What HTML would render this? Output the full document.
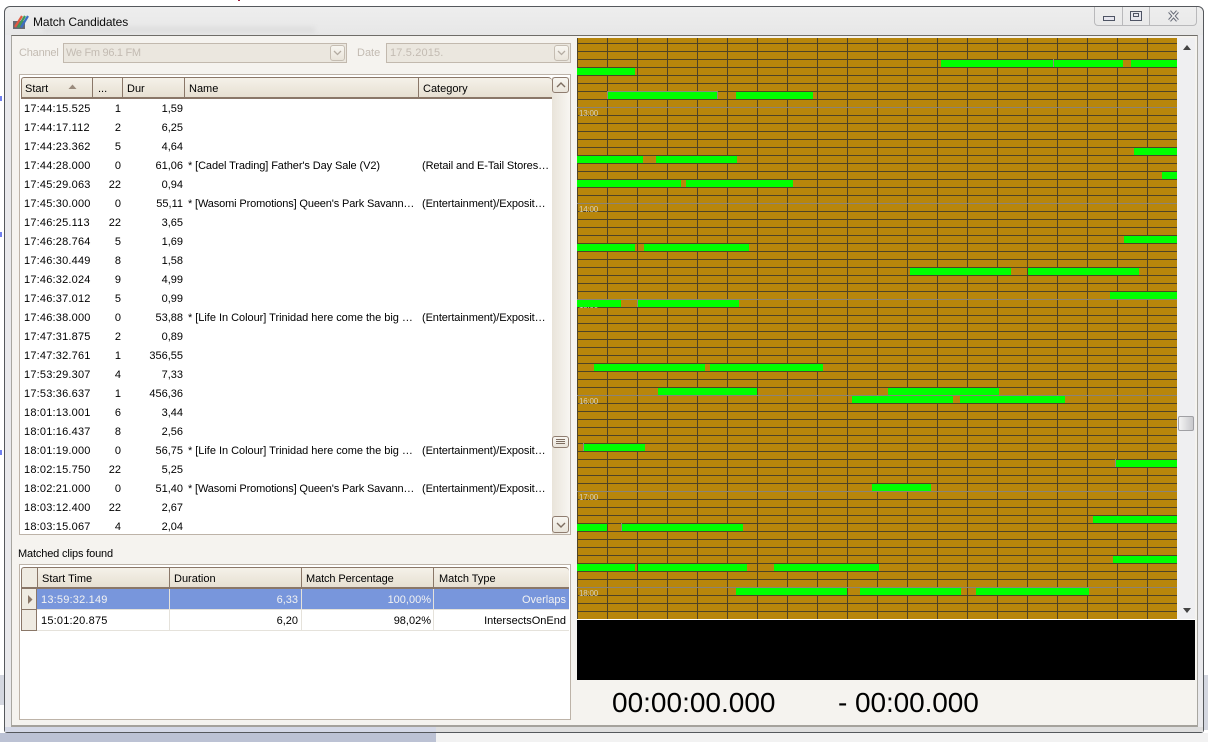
<!DOCTYPE html>
<html><head><meta charset="utf-8">
<style>
html,body{margin:0;padding:0;width:1208px;height:742px;overflow:hidden;background:#fff;font-family:"Liberation Sans",sans-serif;font-size:11px;color:#000}
div{box-sizing:border-box;position:absolute}
.t{white-space:nowrap;line-height:16px;height:14px}
.r{text-align:right}
.k{letter-spacing:.2px}
.n{letter-spacing:-.1px}
.w{letter-spacing:-.14px}
.hd{background:linear-gradient(#f5f1e9,#e7e0d2);border-top:1px solid #8a7768;border-bottom:2px solid #8a7768;border-left:1px solid #8a7768;height:22px}
.bt{background:linear-gradient(#f8f6f1,#e9e4da);border:1px solid #8f7d70;border-radius:3px}
</style></head><body>
<div style="left:0;top:0;width:1208px;height:8px;background:#fff"></div>
<div style="left:238px;top:0;width:2px;height:1px;background:#a02040"></div>
<div style="left:0;top:96px;width:2px;height:5px;background:#7080f0"></div>
<div style="left:0;top:232px;width:2px;height:5px;background:#7080f0"></div>
<div style="left:0;top:450px;width:2px;height:5px;background:#7080f0"></div>
<div style="left:0;top:675px;width:5px;height:30px;background:#d4d7e0"></div>
<div style="left:0;top:733px;width:436px;height:9px;background:#bcc2d4"></div>
<div style="left:436px;top:733px;width:772px;height:9px;background:#f2f2f2"></div>
<div style="left:1204px;top:675px;width:4px;height:55px;background:#d4d7e0"></div>
<div style="left:4px;top:6px;width:1200px;height:727px;background:#e9e9ec;border:1px solid #55585c;border-radius:6px 6px 3px 3px"></div>
<div style="left:5px;top:7px;width:1198px;height:28px;background:linear-gradient(#eeeeee,#e7e7e7);border-radius:6px 6px 0 0"></div>
<div style="left:5px;top:727px;width:431px;height:5px;background:#d4d8e6"></div>
<div style="left:436px;top:727px;width:767px;height:5px;background:#dedede"></div>
<div style="left:43px;top:27px;width:272px;height:6px;background:#dedede;filter:blur(2px)"></div>
<svg style="position:absolute;left:12px;top:13px" width="17" height="17" viewBox="0 0 17 17"><rect x="1" y="8" width="12" height="8" fill="#6a6a70"/><path d="M3 14L10 3" stroke="#e05a40" stroke-width="2.200"/><path d="M6 14.500L13 3" stroke="#3f9a5a" stroke-width="2.200"/><path d="M9 14.500L16 3" stroke="#3b6fc4" stroke-width="2.200"/></svg>
<div class="t" style="left:33px;top:14px;font-size:12px;letter-spacing:-.1px;color:#0a0a0a">Match Candidates</div>
<div style="left:1094px;top:7px;width:103px;height:19px;border:1px solid #b9b9bb;border-top:0;border-radius:0 0 4px 4px"></div>
<div style="left:1122px;top:7px;width:1px;height:19px;background:#b9b9bb"></div>
<div style="left:1149px;top:7px;width:1px;height:19px;background:#b9b9bb"></div>
<div style="left:1103px;top:16px;width:12px;height:5px;border:1px solid #4e5464;background:#e6e6ee"></div>
<div style="left:1130px;top:11px;width:12px;height:10px;border:1px solid #4e5464;background:#e6e6ee"></div>
<div style="left:1133px;top:13px;width:6px;height:4px;border:1px solid #4e5464"></div>
<svg style="position:absolute;left:1167px;top:10px" width="13" height="12"><path d="M2.500 1.500L10.500 10.500M10.500 1.500L2.500 10.500" stroke="#6a6e7a" stroke-width="3.600"/><path d="M2.500 1.500L10.500 10.500M10.500 1.500L2.500 10.500" stroke="#eeeeee" stroke-width="1.600"/></svg>

<div style="left:11px;top:35px;width:1187px;height:692px;background:#f5f3ef;border:1px solid #a8a6a0;border-top:1px solid #6f6d68;border-bottom:2px solid #a5a29c"></div>

<div class="t" style="left:19px;top:45px;color:#c3bbb2;letter-spacing:-.2px">Channel</div>
<div style="left:63px;top:43px;width:284px;height:20px;background:#ebe7df;border:1px solid #c2b9ae"></div>
<div class="t" style="left:66px;top:45px;color:#c3bbb2;letter-spacing:-.3px">We Fm 96.1 FM</div>
<div class="bt" style="left:330px;top:45px;width:15px;height:16px;border-color:#c5bdb2"></div>
<svg style="position:absolute;left:333px;top:50px" width="9" height="6"><path d="M1 1L4.500 4.500L8 1" fill="none" stroke="#b4aca2" stroke-width="1.300"/></svg>
<div class="t" style="left:357px;top:45px;color:#c3bbb2">Date</div>
<div style="left:386px;top:43px;width:185px;height:20px;background:#ebe7df;border:1px solid #c2b9ae"></div>
<div class="t" style="left:390px;top:45px;color:#c3bbb2;letter-spacing:.15px">17.5.2015.</div>
<div class="bt" style="left:554px;top:45px;width:15px;height:16px;border-color:#c5bdb2"></div>
<svg style="position:absolute;left:557px;top:50px" width="9" height="6"><path d="M1 1L4.500 4.500L8 1" fill="none" stroke="#b4aca2" stroke-width="1.300"/></svg>

<div style="left:19px;top:74px;width:552px;height:461px;background:#fff;border:1px solid #bdb3a8"></div>
<div class="hd" style="left:21px;top:77px;width:71px;border-radius:3px 0 0 0"></div>
<div class="hd" style="left:92px;top:77px;width:30px"></div>
<div class="hd" style="left:122px;top:77px;width:62px"></div>
<div class="hd" style="left:184px;top:77px;width:234px"></div>
<div class="hd" style="left:418px;top:77px;width:134px;border-radius:0 4px 0 0"></div>
<div class="t" style="left:25px;top:81px">Start</div>
<svg style="position:absolute;left:68px;top:84px" width="9" height="5"><path d="M0.500 5L4.500 0.500L8.500 5Z" fill="#9a8b7d"/></svg>
<div class="t" style="left:98px;top:81px">...</div>
<div class="t" style="left:127px;top:81px">Dur</div>
<div class="t" style="left:189px;top:81px">Name</div>
<div class="t" style="left:423px;top:81px">Category</div>

<div style="left:552px;top:77px;width:18px;height:457px;background:linear-gradient(90deg,#e9e4da,#f8f6f2)"></div>
<div class="bt" style="left:552px;top:77px;width:17px;height:16px"></div>
<svg style="position:absolute;left:556px;top:82px" width="10" height="6"><path d="M1 5L5 1L9 5" fill="none" stroke="#7d6d60" stroke-width="1.400"/></svg>
<div class="bt" style="left:552px;top:436px;width:17px;height:12px"></div>
<div style="left:556px;top:439px;width:9px;height:1px;background:#7d6d60;box-shadow:0 2px 0 #7d6d60,0 4px 0 #7d6d60"></div>
<div class="bt" style="left:552px;top:516px;width:17px;height:17px"></div>
<svg style="position:absolute;left:556px;top:522px" width="10" height="6"><path d="M1 1L5 5L9 1" fill="none" stroke="#7d6d60" stroke-width="1.400"/></svg>

<div class="t k" style="left:24px;top:101px">17:44:15.525</div><div class="t r" style="left:92px;top:101px;width:29px">1</div><div class="t r" style="left:122px;top:101px;width:61px">1,59</div>
<div class="t k" style="left:24px;top:120px">17:44:17.112</div><div class="t r" style="left:92px;top:120px;width:29px">2</div><div class="t r" style="left:122px;top:120px;width:61px">6,25</div>
<div class="t k" style="left:24px;top:139px">17:44:23.362</div><div class="t r" style="left:92px;top:139px;width:29px">5</div><div class="t r" style="left:122px;top:139px;width:61px">4,64</div>
<div class="t k" style="left:24px;top:158px">17:44:28.000</div><div class="t r" style="left:92px;top:158px;width:29px">0</div><div class="t r" style="left:122px;top:158px;width:61px">61,06</div>
<div class="t n" style="left:188px;top:158px">* [Cadel Trading] Father's Day Sale (V2)</div><div class="t n" style="left:422px;top:158px">(Retail and E-Tail Stores…</div>
<div class="t k" style="left:24px;top:177px">17:45:29.063</div><div class="t r" style="left:92px;top:177px;width:29px">22</div><div class="t r" style="left:122px;top:177px;width:61px">0,94</div>
<div class="t k" style="left:24px;top:196px">17:45:30.000</div><div class="t r" style="left:92px;top:196px;width:29px">0</div><div class="t r" style="left:122px;top:196px;width:61px">55,11</div>
<div class="t w" style="left:188px;top:196px">* [Wasomi Promotions] Queen's Park Savann…</div><div class="t n" style="left:422px;top:196px">(Entertainment)/Exposit…</div>
<div class="t k" style="left:24px;top:215px">17:46:25.113</div><div class="t r" style="left:92px;top:215px;width:29px">22</div><div class="t r" style="left:122px;top:215px;width:61px">3,65</div>
<div class="t k" style="left:24px;top:234px">17:46:28.764</div><div class="t r" style="left:92px;top:234px;width:29px">5</div><div class="t r" style="left:122px;top:234px;width:61px">1,69</div>
<div class="t k" style="left:24px;top:253px">17:46:30.449</div><div class="t r" style="left:92px;top:253px;width:29px">8</div><div class="t r" style="left:122px;top:253px;width:61px">1,58</div>
<div class="t k" style="left:24px;top:272px">17:46:32.024</div><div class="t r" style="left:92px;top:272px;width:29px">9</div><div class="t r" style="left:122px;top:272px;width:61px">4,99</div>
<div class="t k" style="left:24px;top:291px">17:46:37.012</div><div class="t r" style="left:92px;top:291px;width:29px">5</div><div class="t r" style="left:122px;top:291px;width:61px">0,99</div>
<div class="t k" style="left:24px;top:310px">17:46:38.000</div><div class="t r" style="left:92px;top:310px;width:29px">0</div><div class="t r" style="left:122px;top:310px;width:61px">53,88</div>
<div class="t" style="left:188px;top:310px;letter-spacing:-.03px">* [Life In Colour] Trinidad here come the big …</div><div class="t n" style="left:422px;top:310px">(Entertainment)/Exposit…</div>
<div class="t k" style="left:24px;top:329px">17:47:31.875</div><div class="t r" style="left:92px;top:329px;width:29px">2</div><div class="t r" style="left:122px;top:329px;width:61px">0,89</div>
<div class="t k" style="left:24px;top:348px">17:47:32.761</div><div class="t r" style="left:92px;top:348px;width:29px">1</div><div class="t r" style="left:122px;top:348px;width:61px">356,55</div>
<div class="t k" style="left:24px;top:367px">17:53:29.307</div><div class="t r" style="left:92px;top:367px;width:29px">4</div><div class="t r" style="left:122px;top:367px;width:61px">7,33</div>
<div class="t k" style="left:24px;top:386px">17:53:36.637</div><div class="t r" style="left:92px;top:386px;width:29px">1</div><div class="t r" style="left:122px;top:386px;width:61px">456,36</div>
<div class="t k" style="left:24px;top:405px">18:01:13.001</div><div class="t r" style="left:92px;top:405px;width:29px">6</div><div class="t r" style="left:122px;top:405px;width:61px">3,44</div>
<div class="t k" style="left:24px;top:424px">18:01:16.437</div><div class="t r" style="left:92px;top:424px;width:29px">8</div><div class="t r" style="left:122px;top:424px;width:61px">2,56</div>
<div class="t k" style="left:24px;top:443px">18:01:19.000</div><div class="t r" style="left:92px;top:443px;width:29px">0</div><div class="t r" style="left:122px;top:443px;width:61px">56,75</div>
<div class="t" style="left:188px;top:443px;letter-spacing:-.03px">* [Life In Colour] Trinidad here come the big …</div><div class="t n" style="left:422px;top:443px">(Entertainment)/Exposit…</div>
<div class="t k" style="left:24px;top:462px">18:02:15.750</div><div class="t r" style="left:92px;top:462px;width:29px">22</div><div class="t r" style="left:122px;top:462px;width:61px">5,25</div>
<div class="t k" style="left:24px;top:481px">18:02:21.000</div><div class="t r" style="left:92px;top:481px;width:29px">0</div><div class="t r" style="left:122px;top:481px;width:61px">51,40</div>
<div class="t w" style="left:188px;top:481px">* [Wasomi Promotions] Queen's Park Savann…</div><div class="t n" style="left:422px;top:481px">(Entertainment)/Exposit…</div>
<div class="t k" style="left:24px;top:500px">18:03:12.400</div><div class="t r" style="left:92px;top:500px;width:29px">22</div><div class="t r" style="left:122px;top:500px;width:61px">2,67</div>
<div class="t k" style="left:24px;top:519px">18:03:15.067</div><div class="t r" style="left:92px;top:519px;width:29px">4</div><div class="t r" style="left:122px;top:519px;width:61px">2,04</div>

<div class="t" style="left:18px;top:546px;letter-spacing:-.15px">Matched clips found</div>
<div style="left:19px;top:564px;width:552px;height:156px;background:#fff;border:1px solid #bdb3a8"></div>
<div class="hd" style="left:21px;top:567px;width:16px;border-radius:3px 0 0 0;background:#efebe2"></div>
<div class="hd" style="left:37px;top:567px;width:132px"></div>
<div class="hd" style="left:169px;top:567px;width:132px"></div>
<div class="hd" style="left:301px;top:567px;width:132px"></div>
<div class="hd" style="left:433px;top:567px;width:136px;border-radius:0 4px 0 0"></div>
<div class="t" style="left:42px;top:571px">Start Time</div>
<div class="t" style="left:174px;top:571px">Duration</div>
<div class="t n" style="left:306px;top:571px">Match Percentage</div>
<div class="t" style="left:439px;top:571px">Match Type</div>

<div style="left:21px;top:589px;width:16px;height:21px;background:#efebe2;border:1px solid #8a7768;border-width:0 1px 1px 1px"></div>
<div style="left:21px;top:610px;width:16px;height:21px;background:#efebe2;border:1px solid #8a7768;border-width:0 1px 1px 1px"></div>
<svg style="position:absolute;left:28px;top:595px" width="5" height="9"><path d="M0 0L4.500 4.500L0 9Z" fill="#8a7768"/></svg>
<div style="left:37px;top:589px;width:532px;height:20px;background:#7896dc"></div>
<div style="left:169px;top:589px;width:1px;height:41px;background:#e5e2db"></div>
<div style="left:301px;top:589px;width:1px;height:41px;background:#e5e2db"></div>
<div style="left:433px;top:589px;width:1px;height:41px;background:#e5e2db"></div>
<div style="left:37px;top:609px;width:532px;height:1px;background:#e5e2db"></div>
<div style="left:37px;top:630px;width:532px;height:1px;background:#e5e2db"></div>
<div class="t k" style="left:41px;top:592px;color:#f2f2f2">13:59:32.149</div>
<div class="t r" style="left:170px;top:592px;width:128px;color:#f2f2f2">6,33</div>
<div class="t r" style="left:303px;top:592px;width:128px;color:#f2f2f2">100,00%</div>
<div class="t r" style="left:434px;top:592px;width:132px;color:#f2f2f2">Overlaps</div>
<div class="t k" style="left:41px;top:613px">15:01:20.875</div>
<div class="t r" style="left:170px;top:613px;width:128px">6,20</div>
<div class="t r" style="left:303px;top:613px;width:128px">98,02%</div>
<div class="t r" style="left:434px;top:613px;width:132px">IntersectsOnEnd</div>

<svg style="position:absolute;left:577px;top:38px" width="600" height="581" viewBox="577 38 600 581" shape-rendering="crispEdges">
<rect x="577" y="38" width="600" height="582" fill="#b8860b"/>
<path stroke="#4f4326" stroke-width="1" fill="none" d="M577.500 38V620M607.500 38V620M637.500 38V620M667.500 38V620M697.500 38V620M727.500 38V620M757.500 38V620M787.500 38V620M817.500 38V620M847.500 38V620M877.500 38V620M907.500 38V620M937.500 38V620M967.500 38V620M997.500 38V620M1027.500 38V620M1057.500 38V620M1087.500 38V620M1117.500 38V620M1147.500 38V620"/>
<path stroke="#4f4326" stroke-width="1" fill="none" d="M577 43.500H1177M577 51.500H1177M577 59.500H1177M577 67.500H1177M577 75.500H1177M577 83.500H1177M577 91.500H1177M577 99.500H1177M577 115.500H1177M577 123.500H1177M577 131.500H1177M577 139.500H1177M577 147.500H1177M577 155.500H1177M577 163.500H1177M577 171.500H1177M577 179.500H1177M577 187.500H1177M577 195.500H1177M577 211.500H1177M577 219.500H1177M577 227.500H1177M577 235.500H1177M577 243.500H1177M577 251.500H1177M577 259.500H1177M577 267.500H1177M577 275.500H1177M577 283.500H1177M577 291.500H1177M577 307.500H1177M577 315.500H1177M577 323.500H1177M577 331.500H1177M577 339.500H1177M577 347.500H1177M577 355.500H1177M577 363.500H1177M577 371.500H1177M577 379.500H1177M577 387.500H1177M577 403.500H1177M577 411.500H1177M577 419.500H1177M577 427.500H1177M577 435.500H1177M577 443.500H1177M577 451.500H1177M577 459.500H1177M577 467.500H1177M577 475.500H1177M577 483.500H1177M577 499.500H1177M577 507.500H1177M577 515.500H1177M577 523.500H1177M577 531.500H1177M577 539.500H1177M577 547.500H1177M577 555.500H1177M577 563.500H1177M577 571.500H1177M577 579.500H1177M577 595.500H1177M577 603.500H1177M577 611.500H1177"/>
<path stroke="#8a8478" stroke-width="1" fill="none" d="M577 107.500H1177M577 203.500H1177M577 299.500H1177M577 395.500H1177M577 491.500H1177M577 587.500H1177"/>
<g fill="#d6cfba" font-family="Liberation Sans" font-size="8" letter-spacing="-.2" shape-rendering="auto">
<text x="579" y="116">13:00</text><text x="579" y="212">14:00</text><text x="579" y="308">15:00</text><text x="579" y="404">16:00</text><text x="579" y="500">17:00</text><text x="579" y="596">18:00</text>
</g>
<path stroke="#8a8a80" stroke-width="1" fill="none" d="M607.500 91V99M607 91.500H717.500V99M621 299.500H637.500V307M621.500 523V531M583.500 443V451M1115.500 459V467M1053.500 59V67"/>
<g fill="#00ff00">
<rect x="941" y="60" width="112" height="7"/><rect x="1054" y="60" width="69" height="7"/><rect x="1131" y="60" width="46" height="7"/>
<rect x="577" y="68" width="58" height="7"/>
<rect x="608" y="92" width="109" height="7"/><rect x="736" y="92" width="77" height="7"/>
<rect x="1134" y="148" width="43" height="7"/>
<rect x="577" y="156" width="66" height="7"/><rect x="656" y="156" width="81" height="7"/>
<rect x="1162" y="172" width="15" height="7"/>
<rect x="577" y="180" width="104" height="7"/><rect x="686" y="180" width="107" height="7"/>
<rect x="1124" y="236" width="53" height="7"/>
<rect x="577" y="244" width="58" height="7"/><rect x="644" y="244" width="105" height="7"/>
<rect x="910" y="268" width="101" height="7"/><rect x="1028" y="268" width="111" height="7"/>
<rect x="1110" y="292" width="67" height="7"/>
<rect x="577" y="300" width="44" height="7"/><rect x="638" y="300" width="101" height="7"/>
<rect x="594" y="364" width="111" height="7"/><rect x="710" y="364" width="113" height="7"/>
<rect x="658" y="388" width="99" height="7"/><rect x="888" y="388" width="111" height="7"/>
<rect x="852" y="396" width="101" height="7"/><rect x="960" y="396" width="105" height="7"/>
<rect x="584" y="444" width="61" height="7"/>
<rect x="1116" y="460" width="61" height="7"/>
<rect x="872" y="484" width="59" height="7"/>
<rect x="1093" y="516" width="84" height="7"/>
<rect x="577" y="524" width="30" height="7"/><rect x="622" y="524" width="121" height="7"/>
<rect x="1113" y="556" width="64" height="7"/>
<rect x="577" y="564" width="58" height="7"/><rect x="638" y="564" width="109" height="7"/><rect x="774" y="564" width="105" height="7"/>
<rect x="736" y="588" width="111" height="7"/><rect x="860" y="588" width="101" height="7"/><rect x="976" y="588" width="113" height="7"/>
</g>
</svg>

<div style="left:1177px;top:38px;width:18px;height:582px;background:#efeff1"></div>
<svg style="position:absolute;left:1183px;top:45px" width="8" height="5"><path d="M0 5L4 0L8 5Z" fill="#444"/></svg>
<svg style="position:absolute;left:1183px;top:608px" width="8" height="5"><path d="M0 0L4 5L8 0Z" fill="#444"/></svg>
<div style="left:1178px;top:416px;width:16px;height:15px;background:linear-gradient(90deg,#f4f4f4,#c8c8cc);border:1px solid #a0a0a4;border-radius:2px"></div>
<div style="left:577px;top:619px;width:618px;height:1px;background:#fff"></div>
<div style="left:577px;top:620px;width:618px;height:60px;background:#000"></div>

<div class="t" style="left:612px;top:686px;height:34px;line-height:34px;font-size:28px;color:#000">00:00:00.000</div>
<div class="t" style="left:838px;top:686px;height:34px;line-height:34px;font-size:28px;color:#000">-</div>
<div class="t" style="left:855px;top:686px;height:34px;line-height:34px;font-size:28px;letter-spacing:-.1px;color:#000">00:00.000</div>
</body></html>
